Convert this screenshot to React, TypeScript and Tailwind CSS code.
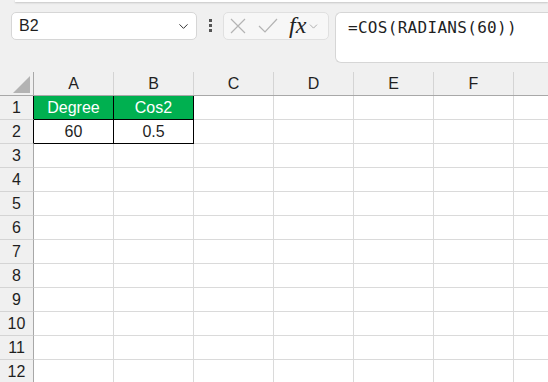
import { ChevronDown } from "lucide-react";

const COLS = ["A", "B", "C", "D", "E", "F", "G"];
const ROWS = Array.from({ length: 12 }, (_, i) => i + 1);

const CELLS: Record<string, string> = {
  A1: "Degree",
  B1: "Cos2",
  A2: "60",
  B2: "0.5",
};

function FormulaBar() {
  return (
    <div className="flex items-start pl-[11px] pt-[10px]">
      {/* name box */}
      <div className="flex h-[28px] w-[186px] items-center justify-between rounded-[5px] border border-[#d6d6d6] bg-white pl-[7px] pr-[5px]">
        <span className="text-[16px] text-[#1f1f1f]">B2</span>
        <ChevronDown size={15} strokeWidth={1.6} className="text-[#333]" />
      </div>

      <div className="ml-[12px] mt-[7px] flex w-[3px] flex-col gap-[2px]">
        <div className="h-[3px] w-[3px] bg-[#555]" />
        <div className="h-[3px] w-[3px] bg-[#555]" />
        <div className="h-[3px] w-[3px] bg-[#555]" />
      </div>

      {/* cancel / enter / fx */}
      <div className="ml-[11px] flex h-[28px] w-[106px] items-center rounded-[5px] border border-[#e0e0e0] bg-[#f7f7f7] pl-[4px]">
        <svg width="18" height="18" viewBox="0 0 18 18" className="ml-[1px]">
          <path d="M2 2 L16 16 M16 2 L2 16" stroke="#b4b4b4" strokeWidth="1.2" fill="none" />
        </svg>
        <svg width="20" height="16" viewBox="0 0 20 16" className="ml-[11px]">
          <path d="M1 8 L7 14 L19 1" stroke="#b4b4b4" strokeWidth="1.2" fill="none" />
        </svg>
        <span className="ml-[11px] mt-[-2px] font-['Liberation_Serif',serif] text-[24px] italic leading-none text-[#222]">
          fx
        </span>
        <ChevronDown size={13} strokeWidth={1.2} className="ml-[1px] text-[#888]" />
      </div>

      {/* formula input */}
      <div className="ml-[6px] h-[51px] flex-1 rounded-l-[6px] border border-r-0 border-[#d6d6d6] bg-white pl-[12px] pt-[3px]">
        <span className="font-['DejaVu_Sans_Mono',monospace] text-[16px] tracking-[0.3px] text-[#1f1f1f]">
          =COS(RADIANS(60))
        </span>
      </div>
    </div>
  );
}

function Grid() {
  return (
    <div className="mt-[9px] font-['Liberation_Sans',sans-serif] text-[16px] text-[#1f1f1f]">
      {/* header row */}
      <div className="flex h-[24px] border-b border-[#a8a8a8]">
        <div className="flex w-[34px] shrink-0 items-end justify-end border-r border-[#a8a8a8] pb-[2px] pr-[3px]">
          <svg width="17" height="17" viewBox="0 0 17 17">
            <path d="M17 0 L17 17 L0 17 Z" fill="#b3b3b3" />
          </svg>
        </div>
        {COLS.map((c, ci) => (
          <div
            key={c}
            className="flex w-[80px] shrink-0 items-center justify-center border-r border-[#d4d4d4]"
          >
            {ci < 6 ? c : ""}
          </div>
        ))}
      </div>

      {ROWS.map((r) => (
        <div key={r} className="flex h-[24px]">
          <div
            className={`flex w-[34px] shrink-0 items-center justify-center border-b border-r border-b-[#d4d4d4] bg-[#f0f0f0] ${
              r <= 2 ? "border-r-black" : "border-r-[#a8a8a8]"
            }`}
          >
            {r}
          </div>
          {COLS.map((c, ci) => {
            const key = `${c}${r}`;
            const inTable = ci < 2 && r <= 2;
            const header = inTable && r === 1;
            return (
              <div
                key={key}
                className={`flex w-[80px] shrink-0 items-center justify-center border-b border-r ${
                  inTable ? "border-black" : "border-[#dadada]"
                } ${header ? "bg-[#00b050] text-white" : "bg-white"}`}
              >
                {CELLS[key] ?? ""}
              </div>
            );
          })}
        </div>
      ))}
    </div>
  );
}

export default function App() {
  return (
    <div className="h-[382px] w-[548px] overflow-hidden bg-[#f0f0f0] font-['Liberation_Sans',sans-serif]">
      <div className="ml-[15px] h-[2px] bg-white shadow-[0_1px_2px_rgba(0,0,0,0.18)]" />
      <FormulaBar />
      <Grid />
    </div>
  );
}
